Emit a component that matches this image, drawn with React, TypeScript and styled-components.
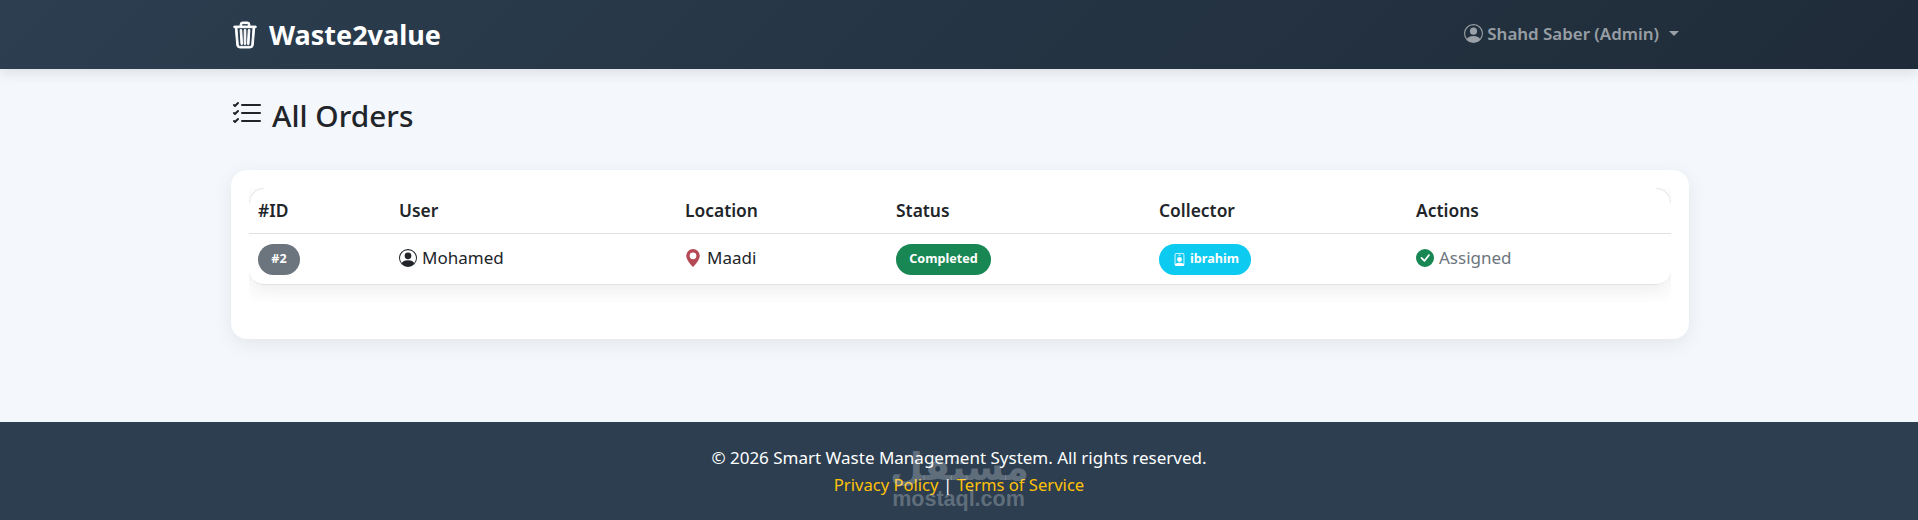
import React from "react";
import styled, { createGlobalStyle } from "styled-components";
import { BsTrash3, BsPersonCircle, BsListCheck, BsGeoAltFill, BsCheckCircleFill, BsPersonBadge } from "react-icons/bs";

const Global = createGlobalStyle`
  html, body { margin: 0; padding: 0; }
  body {
    background: #f4f7fc;
    font-family: "Noto Sans", "Open Sans", sans-serif;
    color: #212529;
    font-size: 17px;
    line-height: 24px;
    overflow: hidden;
  }
`;

const Page = styled.div`
  width: 1918px;
  height: 520px;
  display: flex;
  flex-direction: column;
`;

const Navbar = styled.header`
  height: 69px;
  flex: none;
  background: linear-gradient(135deg, #2c3e50, #1f2b38);
  box-shadow: 0 4px 12px rgba(0, 0, 0, 0.1);
  padding: 0 230px 0 232px;
  display: flex;
  align-items: center;
  justify-content: space-between;
  position: relative;
`;

const Brand = styled.div`
  display: flex;
  align-items: center;
  gap: 11px;
  color: #fff;
  font-size: 27px;
  font-weight: 700;
  svg { width: 26px; height: 28px; stroke: #fff; stroke-width: 0.6px; }
`;

const UserMenu = styled.div`
  display: flex;
  align-items: center;
  gap: 4px;
  color: rgba(255, 255, 255, 0.55);
  font-size: 16.9px;
  font-weight: 600;
  margin: 0 9px 2px 0;
  svg { width: 19px; height: 19px; }
`;

const Caret = styled.span`
  width: 0;
  height: 0;
  margin-left: 6px;
  border-top: 5px solid rgba(255, 255, 255, 0.55);
  border-left: 5px solid transparent;
  border-right: 5px solid transparent;
`;

const Main = styled.main`
  flex: 1;
  padding: 26px 229px 0 231px;
`;

const Heading = styled.h1`
  margin: 0 0 33px;
  display: flex;
  align-items: center;
  gap: 9px;
  font-size: 29.8px;
  line-height: 42px;
  font-weight: 500;
  color: #212529;
  svg { width: 32px; height: 32px; position: relative; top: -2px; }
`;

const Card = styled.section`
  height: 169px;
  box-sizing: border-box;
  background: #fff;
  border-radius: 16px;
  box-shadow: 0 5px 20px rgba(0, 0, 0, 0.07);
  padding: 18px 18px 0;
`;

const TableScroller = styled.div`
  width: 1422px;
  height: 115px;
  overflow: hidden;
`;

const Table = styled.table`
  width: 1422px;
  table-layout: fixed;
  border-collapse: separate;
  border-spacing: 0;
  border-radius: 15px;
  box-shadow: 0 5px 20px rgba(0, 0, 0, 0.08);
`;

const Head = styled.th<{ $w: number }>`
  width: ${(p) => p.$w}px;
  height: 46px;
  box-sizing: border-box;
  padding: 0 9px 2px;
  text-align: left;
  font-size: 17.4px;
  font-weight: 600;
  border-bottom: 1px solid #dee2e6;
  background: #fff;
  position: relative;
  &:first-child { border-top-left-radius: 15px; }
  &:last-child { border-top-right-radius: 15px; }
  &:first-child::before, &:last-child::before {
    content: "";
    position: absolute;
    top: 0;
    width: 15px;
    height: 15px;
    box-sizing: border-box;
    border-top: 1px solid #e4e6ea;
  }
  &:first-child::before { left: 0; border-left: 1px solid #e4e6ea; border-top-left-radius: 15px; }
  &:last-child::before { right: 0; border-right: 1px solid #e4e6ea; border-top-right-radius: 15px; }
`;

const Cell = styled.td`
  height: 51px;
  box-sizing: border-box;
  padding: 0 9px;
  font-size: 17px;
  background: #fff;
  border-bottom: 1px solid #dee2e6;
  &:first-child { border-bottom-left-radius: 15px; }
  &:last-child { border-bottom-right-radius: 15px; }
`;

const Inline = styled.span<{ $muted?: boolean }>`
  display: inline-flex;
  align-items: center;
  gap: 5px;
  color: ${(p) => (p.$muted ? "#6c757d" : "#212529")};
  svg { width: 18px; height: 18px; }
`;

const Pin = styled(BsGeoAltFill)`
  color: #b54a55;
  margin-left: -1px;
`;

const Check = styled(BsCheckCircleFill)`
  color: #198754;
`;

const Pill = styled.span<{ $bg: string; $w: number; $inset?: number }>`
  display: inline-flex;
  align-items: center;
  justify-content: center;
  gap: 4px;
  width: ${(p) => p.$w}px;
  height: 31px;
  box-sizing: border-box;
  padding-left: ${(p) => p.$inset ?? 0}px;
  border-radius: 16px;
  background: ${(p) => p.$bg};
  color: #fff;
  font-size: 12.6px;
  font-weight: 700;
  svg { width: 13px; height: 15px; }
`;

const Footer = styled.footer`
  height: 98px;
  flex: none;
  background: #2c3e50;
  color: #fff;
  text-align: center;
  padding-top: 23px;
  box-sizing: border-box;
  font-size: 17px;
  line-height: 26.5px;
  position: relative;
`;

const FootLink = styled.a`
  color: #ffc107;
  font-size: 16.6px;
`;

const Watermark = styled.div`
  position: absolute;
  left: 890px;
  top: 24px;
  width: 137px;
  text-align: center;
  color: rgba(255, 255, 255, 0.25);
  font-weight: 700;
  pointer-events: none;
`;

const WatermarkArabic = styled.div`
  font-family: "DejaVu Sans", sans-serif;
  font-size: 38px;
  line-height: 42px;
  padding-right: 12px;
`;

const WatermarkLatin = styled.div`
  font-family: "Liberation Sans", sans-serif;
  font-size: 21.5px;
  line-height: 22px;
`;

export default function App() {
  return (
    <Page>
      <Global />
      <Navbar>
        <Brand><BsTrash3 />Waste2value</Brand>
        <UserMenu><BsPersonCircle />Shahd Saber (Admin)<Caret /></UserMenu>
      </Navbar>
      <Main>
        <Heading><BsListCheck />All Orders</Heading>
        <Card>
          <TableScroller>
            <Table>
              <thead>
                <tr>
                  <Head $w={141}>#ID</Head>
                  <Head $w={286}>User</Head>
                  <Head $w={211}>Location</Head>
                  <Head $w={263}>Status</Head>
                  <Head $w={257}>Collector</Head>
                  <Head $w={264}>Actions</Head>
                </tr>
              </thead>
              <tbody>
                <tr>
                  <Cell><Pill $bg="#6c757d" $w={42}>#2</Pill></Cell>
                  <Cell><Inline><BsPersonCircle />Mohamed</Inline></Cell>
                  <Cell><Inline><Pin />Maadi</Inline></Cell>
                  <Cell><Pill $bg="#198754" $w={95}>Completed</Pill></Cell>
                  <Cell><Pill $bg="#0dcaf0" $w={92} $inset={2}><BsPersonBadge />ibrahim</Pill></Cell>
                  <Cell><Inline $muted><Check />Assigned</Inline></Cell>
                </tr>
              </tbody>
            </Table>
          </TableScroller>
        </Card>
      </Main>
      <Footer>
        <div>© 2026 Smart Waste Management System. All rights reserved.</div>
        <div><FootLink>Privacy Policy</FootLink> | <FootLink>Terms of Service</FootLink></div>
        <Watermark>
          <WatermarkArabic>مستقل</WatermarkArabic>
          <WatermarkLatin>mostaql.com</WatermarkLatin>
        </Watermark>
      </Footer>
    </Page>
  );
}
